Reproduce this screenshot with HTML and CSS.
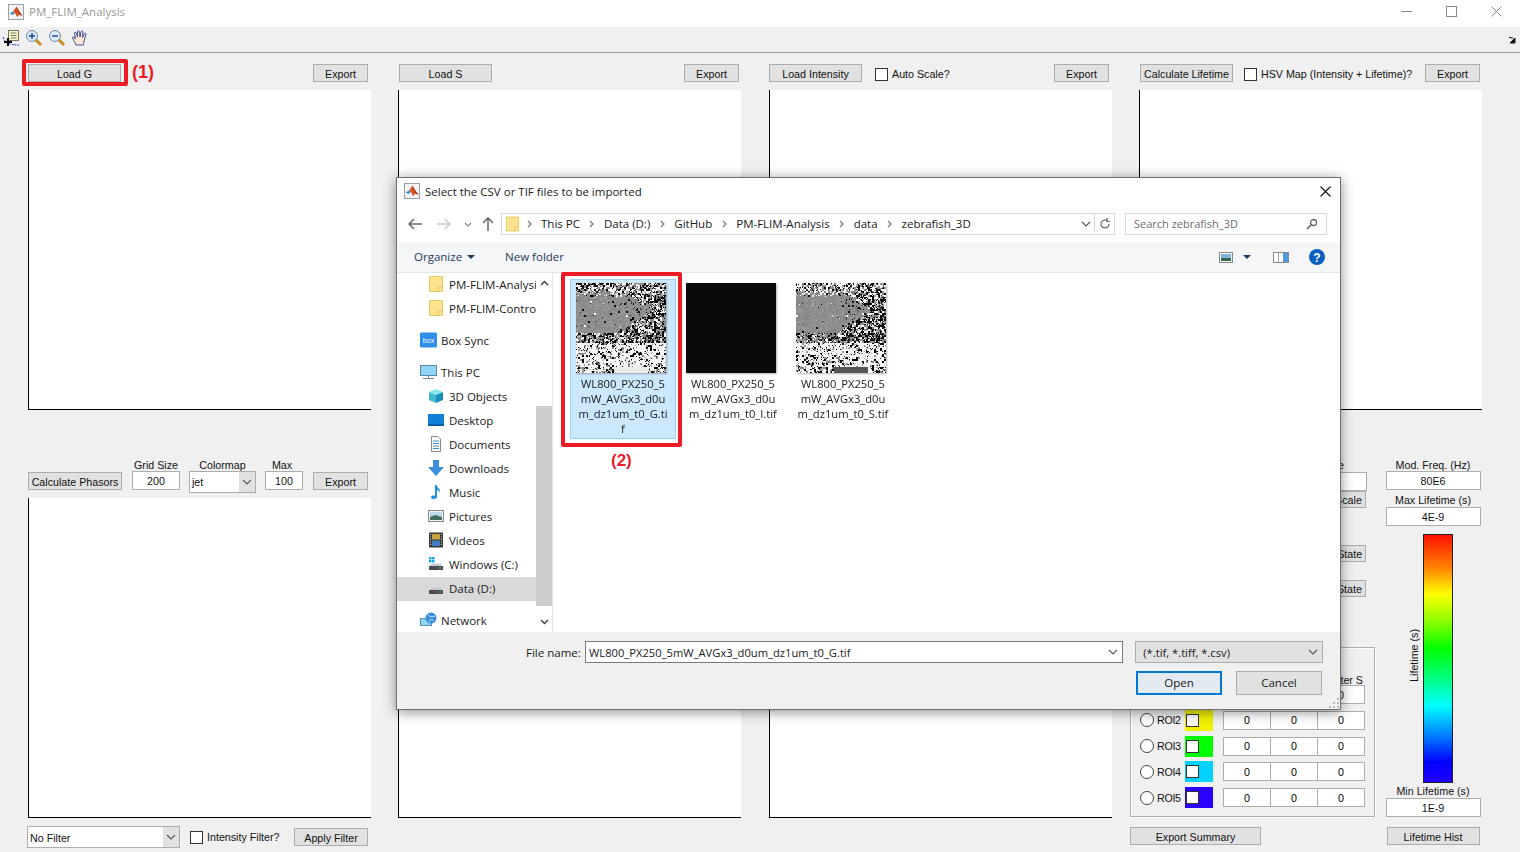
FILE: index.html
```html
<!DOCTYPE html>
<html lang="en">
<head>
    <meta charset="UTF-8">
    <title>PM_FLIM_Analysis</title>
    <link rel="stylesheet" href="styles.css">
</head>
<body>
    <svg class="defs" width="0" height="0">
        <symbol id="matlab" viewBox="0 0 16 16">
            <rect x="0.5" y="0.5" width="15" height="15" fill="#f4f4f6" stroke="#9aa0aa"/>
            <path d="M1.5 9.5 5 7.5 7 9 4.5 11z" fill="#3f8fd0"/>
            <path d="M5 7.5 8.5 2.5 11 7 14.5 12 11.5 10.5 9 13 7 9z" fill="#d9541e"/>
            <path d="M8.5 2.5 11 7 14.5 12 11.5 10.5 9.5 6z" fill="#a8321a"/>
        </symbol>
        <symbol id="folder" viewBox="0 0 14 16">
            <path d="M0.5 0.5H13.5V15.5H0.5z" fill="#fde38f" stroke="#e8c766"/>
            <path d="M9.5 15V11H13" fill="none" stroke="#e8c766"/>
        </symbol>
        <symbol id="drive" viewBox="0 0 16 16">
            <path d="M2 10 3.5 7.5H12.5L14 10z" fill="#c4c7cb"/>
            <rect x="1" y="10" width="14" height="4" fill="#4a4f55"/>
            <rect x="11" y="11.5" width="2" height="1" fill="#4fd36a"/>
        </symbol>
        <symbol id="chev" viewBox="0 0 10 6">
            <path d="M1 1 5 5 9 1" fill="none" stroke="#555" stroke-width="1.1"/>
        </symbol>
        <symbol id="crumb" viewBox="0 0 5 8">
            <path d="M1 1 4 4 1 7" fill="none" stroke="#777" stroke-width="1.2"/>
        </symbol>
    </svg>

    <div class="titlebar">
        <svg class="app-icon"><use href="#matlab"/></svg>
        <span class="app-title">PM_FLIM_Analysis</span>
        <div class="win-btns">
            <svg width="11" height="11" viewBox="0 0 11 11"><path d="M0 5.5H11" stroke="#8a8a8a"/></svg>
            <svg width="11" height="11" viewBox="0 0 11 11"><rect x="0.5" y="0.5" width="10" height="10" fill="none" stroke="#8a8a8a"/></svg>
            <svg width="11" height="11" viewBox="0 0 11 11"><path d="M0.5 0.5 10.5 10.5M10.5 0.5 0.5 10.5" stroke="#8a8a8a"/></svg>
        </div>
    </div>

    <div class="toolbar">
        <svg width="18" height="18" viewBox="0 0 18 18">
            <path d="M1 8C3 13 6 16 17 16" fill="none" stroke="#2230d0" stroke-dasharray="2 1"/>
            <rect x="6.5" y="1.5" width="10" height="10" fill="#fbf6c8" stroke="#77775a"/>
            <path d="M8.5 4H14.500M8.500 6.500H14.500M8.500 9H14.500" stroke="#777"/>
            <path d="M6 9V17M2 13H10" stroke="#000" stroke-width="2"/>
        </svg>
        <svg width="18" height="18" viewBox="0 0 18 18">
            <path d="M10.500 10.500 16 16" stroke="#c98a1e" stroke-width="3"/>
            <circle cx="7" cy="7" r="5.500" fill="#d8ecfb" stroke="#7b8a99"/>
            <path d="M4 7H10M7 4V10" stroke="#1d3f8f" stroke-width="1.400"/>
        </svg>
        <svg width="18" height="18" viewBox="0 0 18 18">
            <path d="M10.500 10.500 16 16" stroke="#c98a1e" stroke-width="3"/>
            <circle cx="7" cy="7" r="5.500" fill="#d8ecfb" stroke="#7b8a99"/>
            <path d="M4 7H10" stroke="#1d3f8f" stroke-width="1.400"/>
        </svg>
        <svg width="18" height="18" viewBox="0 0 18 18">
            <path d="M5 16C4 13 1.500 10 1.500 8.500 2.500 7.500 4 9 4.500 10L3.500 4C3.500 3 5 3 5.500 4L6.500 8 6.500 2.500C6.500 1.500 8 1.500 8.500 2.500L9 8 10 2.500C10.500 1.500 12 2 12 3L11.500 8.500 13.500 4.500C14.500 4 15.500 4.500 15 5.500L13 12C13 14 12.500 15 12.500 16z" fill="#fde9d2" stroke="#2a3d8f" stroke-width="0.900"/>
        </svg>
        <svg class="tb-arrow" width="8" height="8" viewBox="0 0 8 8"><path d="M1 1.500H3M7 2V7H2zM5 2 3 2" fill="#111" stroke="#111"/></svg>
    </div>

    <main class="workspace">
        <section class="col">
            <div class="ctl-row top-row">
                <button class="btn wide">Load G</button>
                <button class="btn export">Export</button>
            </div>
            <div class="axes"></div>
            <div class="head-row">
                <button class="btn calc">Calculate Phasors</button>
                <label class="field grid-size">Grid Size<input class="box" value="200"></label>
                <div class="field colormap">Colormap
                    <div class="combo tall"><span>jet</span><i><svg width="10" height="6"><use href="#chev"/></svg></i></div>
                </div>
                <label class="field max"><span class="max-label">Max</span><input class="box" value="100"></label>
                <button class="btn export">Export</button>
            </div>
            <div class="axes"></div>
            <div class="ctl-row foot-row">
                <div class="combo filter"><span>No Filter</span><i><svg width="10" height="6"><use href="#chev"/></svg></i></div>
                <label class="check-label"><input type="checkbox">Intensity Filter?</label>
                <button class="btn apply">Apply Filter</button>
            </div>
        </section>

        <section class="col">
            <div class="ctl-row top-row">
                <button class="btn wide shift">Load S</button>
                <button class="btn export">Export</button>
            </div>
            <div class="axes"></div>
            <div class="head-row"></div>
            <div class="axes"></div>
        </section>

        <section class="col">
            <div class="ctl-row top-row">
                <button class="btn wide">Load Intensity</button>
                <label class="check-label auto"><input type="checkbox">Auto Scale?</label>
                <button class="btn export">Export</button>
            </div>
            <div class="axes"></div>
            <div class="head-row"></div>
            <div class="axes"></div>
        </section>

        <section class="col">
            <div class="ctl-row top-row">
                <button class="btn wide shift">Calculate Lifetime</button>
                <label class="check-label hsv"><input type="checkbox">HSV Map (Intensity + Lifetime)?</label>
                <button class="btn export last">Export</button>
            </div>
            <div class="axes"></div>
            <div class="side">
                <div class="side-left">
                    <div class="phase-label">Phase</div>
                    <input class="box phase-box" value="">
                    <button class="btn side-btn scale">Auto Scale</button>
                    <button class="btn side-btn save">Save State</button>
                    <button class="btn side-btn load">Load State</button>
                    <div class="roi-panel">
                        <div class="roi-head">Center S</div>
                        <div class="roi-row"><i class="radio"></i><span>ROI1</span><b class="swatch red"><input type="checkbox"></b><div class="triple"><input value="0"><input value="0"><input value="0"></div></div>
                        <div class="roi-row"><i class="radio"></i><span>ROI2</span><b class="swatch yellow"><input type="checkbox"></b><div class="triple"><input value="0"><input value="0"><input value="0"></div></div>
                        <div class="roi-row"><i class="radio"></i><span>ROI3</span><b class="swatch green"><input type="checkbox"></b><div class="triple"><input value="0"><input value="0"><input value="0"></div></div>
                        <div class="roi-row"><i class="radio"></i><span>ROI4</span><b class="swatch cyan"><input type="checkbox"></b><div class="triple"><input value="0"><input value="0"><input value="0"></div></div>
                        <div class="roi-row"><i class="radio"></i><span>ROI5</span><b class="swatch blue"><input type="checkbox"></b><div class="triple"><input value="0"><input value="0"><input value="0"></div></div>
                    </div>
                    <button class="btn summary">Export Summary</button>
                </div>
                <div class="side-right">
                    <div class="side-label first-label">Mod. Freq. (Hz)</div>
                    <input class="box side-box" value="80E6">
                    <div class="side-label second">Max Lifetime (s)</div>
                    <input class="box side-box" value="4E-9">
                    <div class="bar-row">
                        <span class="bar-label">Lifetime (s)</span>
                        <div class="jet"></div>
                    </div>
                    <div class="side-label third">Min Lifetime (s)</div>
                    <input class="box side-box" value="1E-9">
                    <button class="btn hist">Lifetime Hist</button>
                </div>
            </div>
        </section>
    </main>

    <div class="dialog">
        <div class="dlg-title">
            <svg class="app-icon"><use href="#matlab"/></svg>
            <span>Select the CSV or TIF files to be imported</span>
            <svg class="dlg-close" width="11" height="11" viewBox="0 0 11 11"><path d="M0.500 0.500 10.500 10.500M10.500 0.500 0.500 10.500" stroke="#111" stroke-width="1.100"/></svg>
        </div>

        <div class="dlg-nav">
            <svg width="14" height="12" viewBox="0 0 14 12"><path d="M6 1 1 6 6 11M1 6H14" fill="none" stroke="#666" stroke-width="1.500"/></svg>
            <svg class="nav-fwd" width="14" height="12" viewBox="0 0 14 12"><path d="M8 1 13 6 8 11M13 6H0" fill="none" stroke="#ccc" stroke-width="1.500"/></svg>
            <svg class="nav-drop" width="8" height="5" viewBox="0 0 8 5"><path d="M1 1 4 4 7 1" fill="none" stroke="#888" stroke-width="1.200"/></svg>
            <svg class="nav-up" width="12" height="14" viewBox="0 0 12 14"><path d="M1 6 6 1 11 6M6 1V14" fill="none" stroke="#666" stroke-width="1.500"/></svg>
            <div class="address">
                <svg class="addr-folder" width="13" height="16"><use href="#folder"/></svg>
                <svg class="crumb" width="5" height="8"><use href="#crumb"/></svg><span>This PC</span>
                <svg class="crumb" width="5" height="8"><use href="#crumb"/></svg><span>Data (D:)</span>
                <svg class="crumb" width="5" height="8"><use href="#crumb"/></svg><span>GitHub</span>
                <svg class="crumb" width="5" height="8"><use href="#crumb"/></svg><span>PM-FLIM-Analysis</span>
                <svg class="crumb" width="5" height="8"><use href="#crumb"/></svg><span>data</span>
                <svg class="crumb" width="5" height="8"><use href="#crumb"/></svg><span>zebrafish_3D</span>
                <svg class="addr-chev" width="10" height="6"><use href="#chev"/></svg>
                <div class="addr-refresh">
                    <svg width="12" height="12" viewBox="0 0 12 12"><path d="M10 6A4 4 0 1 1 8 2.500M8 0V3.500H11" fill="none" stroke="#666" stroke-width="1.200"/></svg>
                </div>
            </div>
            <div class="search">
                <span>Search zebrafish_3D</span>
                <svg width="12" height="12" viewBox="0 0 12 12"><circle cx="7.500" cy="4.500" r="3" fill="none" stroke="#666" stroke-width="1.300"/><path d="M5.500 6.500 1 11" stroke="#666" stroke-width="1.600"/></svg>
            </div>
        </div>

        <div class="dlg-tools">
            <span class="organize">Organize</span>
            <svg class="tri" width="8" height="4" viewBox="0 0 8 4"><path d="M0 0H8L4 4z" fill="#1e395b"/></svg>
            <span class="new-folder">New folder</span>
            <svg class="view-ico" width="14" height="11" viewBox="0 0 14 11"><rect x="0.500" y="0.500" width="13" height="10" fill="#fff" stroke="#888"/><rect x="2" y="2" width="10" height="4" fill="#7fb3dc"/><rect x="2" y="6" width="10" height="3" fill="#2e6b4f"/></svg>
            <svg class="tri view-tri" width="8" height="4" viewBox="0 0 8 4"><path d="M0 0H8L4 4z" fill="#1e395b"/></svg>
            <svg class="pane-ico" width="16" height="11" viewBox="0 0 16 11"><rect x="0.500" y="0.500" width="15" height="10" fill="#fff" stroke="#888"/><rect x="10" y="1" width="5" height="9" fill="#4a9be0"/><path d="M5.500 1V10" stroke="#aaa"/></svg>
            <svg class="help-ico" width="16" height="16" viewBox="0 0 16 16"><circle cx="8" cy="8" r="8" fill="#0a5fc0"/><text x="8" y="12.500" text-anchor="middle" class="help-q">?</text></svg>
        </div>

        <div class="dlg-body">
            <nav class="tree">
                <div class="tree-list">
                    <div class="item sub first"><svg width="16" height="16"><use href="#folder"/></svg><span>PM-FLIM-Analysis</span></div>
                    <div class="item sub"><svg width="16" height="16"><use href="#folder"/></svg><span>PM-FLIM-Control</span></div>
                    <div class="item top gap">
                        <svg width="17" height="16" viewBox="0 0 17 16"><rect y="0.500" width="17" height="15" rx="1" fill="#2f8fe8"/><text x="8.500" y="10.500" text-anchor="middle" class="box-word">box</text></svg>
                        <span>Box Sync</span>
                    </div>
                    <div class="item top gap">
                        <svg width="17" height="16" viewBox="0 0 17 16"><rect x="0.500" y="1.500" width="16" height="10" fill="#8fd4f5" stroke="#5a8aa8"/><path d="M8.500 12V14M3 14.500H14" stroke="#7b8a99"/></svg>
                        <span>This PC</span>
                    </div>
                    <div class="item sub">
                        <svg width="16" height="16" viewBox="0 0 16 16"><path d="M8 1 15 4 8 7 1 4z" fill="#8de4f0"/><path d="M1 4 8 7V15L1 12z" fill="#41b8d6"/><path d="M15 4 8 7V15L15 12z" fill="#1a8eb8"/></svg>
                        <span>3D Objects</span>
                    </div>
                    <div class="item sub">
                        <svg width="16" height="16" viewBox="0 0 16 16"><rect y="2" width="16" height="12" fill="#0f7fd8"/><rect y="12.500" width="16" height="1.500" fill="#0a4f90"/></svg>
                        <span>Desktop</span>
                    </div>
                    <div class="item sub">
                        <svg width="16" height="16" viewBox="0 0 16 16"><path d="M3.500 0.500H10L12.500 3V15.500H3.500z" fill="#fff" stroke="#8a8a8a"/><path d="M5 5H11M5 7.500H11M5 10H11M5 12.500H11" stroke="#3f8fd0"/></svg>
                        <span>Documents</span>
                    </div>
                    <div class="item sub">
                        <svg width="16" height="16" viewBox="0 0 16 16"><path d="M5 0H11V7H16L8 16 0 7H5z" fill="#3a8edb"/></svg>
                        <span>Downloads</span>
                    </div>
                    <div class="item sub">
                        <svg width="16" height="16" viewBox="0 0 16 16"><path d="M7 1H8.500C9 4 13 5 12 9 11.500 6.500 10 6.500 9 6V13C9 15 3.500 16 3 13.500 3 11.500 6 11 7 12z" fill="#1e90e6"/></svg>
                        <span>Music</span>
                    </div>
                    <div class="item sub">
                        <svg width="16" height="16" viewBox="0 0 16 16"><rect x="0.500" y="2.500" width="15" height="11" fill="#f4f4f4" stroke="#888"/><rect x="2" y="4" width="12" height="5" fill="#bcd9ea"/><path d="M2 9 7 7 14 9V12H2z" fill="#3d7060"/></svg>
                        <span>Pictures</span>
                    </div>
                    <div class="item sub">
                        <svg width="16" height="16" viewBox="0 0 16 16"><rect x="1" y="0.500" width="14" height="15" fill="#3a3a3a"/><rect x="4" y="2" width="8" height="5.500" fill="#c8a03c"/><rect x="4" y="8.500" width="8" height="5.500" fill="#3f7fc0"/><path d="M2.500 2V14M13.500 2V14" stroke="#ccc" stroke-dasharray="1 1.500"/></svg>
                        <span>Videos</span>
                    </div>
                    <div class="item sub">
                        <svg width="16" height="16"><use href="#drive"/><rect x="1" y="1" width="2.500" height="2.500" fill="#12a5e8"/><rect x="4" y="1" width="2.500" height="2.500" fill="#12a5e8"/><rect x="1" y="4" width="2.500" height="2.500" fill="#12a5e8"/><rect x="4" y="4" width="2.500" height="2.500" fill="#12a5e8"/></svg>
                        <span>Windows (C:)</span>
                    </div>
                    <div class="item sub selected"><svg width="16" height="16"><use href="#drive"/></svg><span>Data (D:)</span></div>
                    <div class="item top gap">
                        <svg width="17" height="16" viewBox="0 0 17 16"><rect x="0.500" y="6.500" width="11" height="7" fill="#8fd4f5" stroke="#5a8aa8"/><circle cx="11" cy="6" r="5.500" fill="#3a8edb"/><path d="M8 3C10 5 12 5 15 4M9 10C10 7 12 7 14 9" stroke="#bfe3f8" fill="none"/></svg>
                        <span>Network</span>
                    </div>
                </div>
                <div class="tree-scroll">
                    <svg width="9" height="6" viewBox="0 0 9 6"><path d="M1 5 4.500 1.500 8 5" fill="none" stroke="#444" stroke-width="1.500"/></svg>
                    <div class="thumb-bar"></div>
                    <svg width="9" height="6" viewBox="0 0 9 6"><path d="M1 1 4.500 4.500 8 1" fill="none" stroke="#444" stroke-width="1.500"/></svg>
                </div>
            </nav>
            <div class="files">
                <figure class="tile selected">
                    <canvas class="shot" width="90" height="90" data-seed="17" data-kind="g"></canvas>
                    <figcaption>WL800_PX250_5<br>mW_AVGx3_d0u<br>m_dz1um_t0_G.ti<br>f</figcaption>
                </figure>
                <figure class="tile">
                    <div class="shot black"></div>
                    <figcaption>WL800_PX250_5<br>mW_AVGx3_d0u<br>m_dz1um_t0_I.tif</figcaption>
                </figure>
                <figure class="tile">
                    <canvas class="shot" width="90" height="90" data-seed="91" data-kind="s"></canvas>
                    <figcaption>WL800_PX250_5<br>mW_AVGx3_d0u<br>m_dz1um_t0_S.tif</figcaption>
                </figure>
            </div>
        </div>

        <div class="dlg-foot">
            <div class="foot-line">
                <span class="fname-label">File name:</span>
                <div class="fname"><span>WL800_PX250_5mW_AVGx3_d0um_dz1um_t0_G.tif</span><svg width="10" height="6"><use href="#chev"/></svg></div>
                <div class="ftype"><span>(*.tif, *.tiff, *.csv)</span><svg width="10" height="6"><use href="#chev"/></svg></div>
            </div>
            <div class="foot-actions">
                <button class="dlg-btn primary">Open</button>
                <button class="dlg-btn">Cancel</button>
            </div>
            <svg class="grip" width="10" height="10" viewBox="0 0 10 10"><path d="M8 0h2v2H8zM4 4h2v2H4zM8 4h2v2H8zM0 8h2v2H0zM4 8h2v2H4zM8 8h2v2H8z" fill="#bbb"/></svg>
        </div>
    </div>

    <div class="mark mark-one"></div>
    <div class="mark-text text-one">(1)</div>
    <div class="mark mark-two"></div>
    <div class="mark-text text-two">(2)</div>

    <script src="script.js"></script>
</body>
</html>
```

FILE: styles.css
```css
* {
    box-sizing: border-box;
}

html, body {
    margin: 0;
    height: 852px;
    overflow: hidden;
}

body {
    position: relative;
    background-color: #f0f0f0;
    font-family: "Liberation Sans", Arial, sans-serif;
    font-size: 10.7px;
    color: #111;
}

.defs {
    position: absolute;
}

button {
    font: inherit;
    color: inherit;
    padding: 0;
}

/* window chrome */
.titlebar {
    display: flex;
    align-items: center;
    height: 27px;
    padding-left: 8px;
    padding-bottom: 4px;
    background: #fff;
}

.app-icon {
    width: 16px;
    height: 16px;
}

.app-title {
    margin-left: 5px;
    font-family: "Open Sans", sans-serif;
    font-size: 11.5px;
    color: #9a9a9a;
}

.win-btns {
    display: flex;
    gap: 34px;
    margin-left: auto;
    padding-right: 18px;
}

.toolbar {
    display: flex;
    align-items: center;
    gap: 5px;
    height: 26px;
    padding-left: 2px;
    padding-bottom: 3px;
    border-bottom: 1px solid #a0a0a0;
}

.tb-arrow {
    margin-left: auto;
    margin-right: 4px;
    margin-top: 3px;
}

/* matlab figure */
.workspace {
    display: grid;
    grid-template-columns: 343px 344px 343px 343px;
    column-gap: 27px;
    padding-left: 28px;
}

.col {
    display: flex;
    flex-direction: column;
}

.ctl-row {
    display: flex;
    align-items: center;
}

.top-row {
    height: 18px;
    margin-top: 11px;
    margin-bottom: 8px;
}

.foot-row {
    height: 22px;
    margin-top: 8px;
    margin-left: -1px;
}

.axes {
    width: 343px;
    height: 320px;
    background: #fff;
    border-left: 1px solid #000;
    border-bottom: 1px solid #000;
    flex: none;
}

.btn {
    height: 18px;
    padding-top: 1px;
    background: #e1e1e1;
    border: 1px solid #adadad;
    text-align: center;
    white-space: nowrap;
}

.wide {
    width: 93px;
}

.shift {
    margin-left: 1px;
}

.export {
    width: 55px;
    margin-left: auto;
    margin-right: 3px;
}

.last {
    margin-right: 2px;
}

.box {
    display: block;
    height: 19px;
    padding: 0;
    border: 1px solid #adadad;
    background: #fff;
    font: inherit;
    color: inherit;
    text-align: center;
}

.head-row {
    display: flex;
    align-items: flex-start;
    height: 88px;
    padding-top: 48px;
    flex: none;
}

.head-row .btn {
    margin-top: 14px;
}

.calc {
    width: 94px;
}

.field {
    display: flex;
    flex-direction: column;
    align-items: center;
    line-height: 15px;
}

.field .box, .field .combo {
    margin-top: -2px;
}

.grid-size {
    margin-left: 10px;
}

.grid-size .box {
    width: 48px;
}

.colormap {
    margin-left: 9px;
}

.max {
    margin-left: 9px;
}

.max-label {
    margin-right: 4px;
}

.max .box {
    width: 38px;
}

.combo {
    display: flex;
    align-items: center;
    height: 22px;
    background: #fff;
    border: 1px solid #adadad;
    padding-left: 2px;
}

.combo span {
    flex: 1;
    padding-top: 1px;
}

.combo i {
    display: flex;
    align-items: center;
    justify-content: center;
    width: 16px;
    height: 100%;
    background: #e1e1e1;
}

.tall {
    width: 67px;
}

.filter {
    width: 153px;
}

.check-label {
    display: flex;
    align-items: center;
    gap: 4px;
    white-space: nowrap;
}

.check-label input, .swatch input {
    appearance: none;
    flex: none;
    width: 13px;
    height: 13px;
    margin: 0;
    background: #fff;
    border: 1px solid #333;
}

.top-row .check-label {
    margin-top: 2px;
}

.foot-row .check-label {
    margin-left: 10px;
}

.apply {
    width: 74px;
    margin-left: auto;
    margin-right: 3px;
}

.auto {
    margin-left: 13px;
}

.hsv {
    margin-left: 11px;
}

/* lower right controls */
.side {
    display: flex;
    gap: 11px;
    width: 352px;
    margin-left: -9px;
    margin-top: 48px;
}

.side-left {
    display: flex;
    flex-direction: column;
    align-items: flex-end;
    width: 245px;
}

.phase-label {
    margin-top: 1px;
    margin-right: 31px;
    line-height: 13px;
}

.phase-box {
    width: 50px;
    margin-right: 8px;
}

.side-btn {
    width: 60px;
    height: 17px;
    padding-top: 0;
    margin-right: 9px;
}

.scale {
    margin-top: 0;
}

.save {
    margin-top: 37px;
}

.load {
    margin-top: 18px;
}

.roi-panel {
    width: 245px;
    height: 170px;
    margin-top: 50px;
    padding: 26px 9px 0 9px;
    border: 1px solid #adadad;
    box-shadow: inset 1px 1px 0 #fff, 1px 1px 0 #fff;
}

.roi-head {
    height: 12px;
    margin-bottom: -2px;
    line-height: 12px;
    padding-right: 2px;
    text-align: right;
}

.roi-row {
    display: flex;
    align-items: center;
    height: 21px;
    margin-bottom: 4.8px;
    letter-spacing: -0.3px;
}

.radio {
    flex: none;
    width: 14px;
    height: 14px;
    background: #fff;
    border: 1px solid #444;
    border-radius: 50%;
}

.roi-row span {
    width: 34px;
    padding-left: 3px;
}

.swatch {
    display: flex;
    align-items: center;
    flex: none;
    width: 28px;
    height: 21px;
    padding-left: 1px;
}

.red { background: #ff0000; }
.yellow { background: #f0f000; }
.green { background: #00ff00; }
.cyan { background: #00d2ff; }
.blue { background: #2a00ff; }

.triple {
    display: grid;
    grid-template-columns: repeat(3, 47px);
    margin-left: 11px;
    height: 19px;
}

.triple input {
    min-width: 0;
    margin-left: -1px;
    padding: 0;
    border: 1px solid #adadad;
    background: #fff;
    font: inherit;
    letter-spacing: 0;
    text-align: center;
}

.summary {
    align-self: flex-start;
    width: 131px;
    margin-top: 10px;
}

.side-right {
    display: flex;
    flex-direction: column;
    align-items: center;
    width: 96px;
    margin-left: -1px;
}

.side-label {
    height: 13px;
    line-height: 13px;
    white-space: nowrap;
}

.first-label {
    line-height: 15px;
}

.second {
    margin-top: 4px;
}

.third {
    margin-top: 2px;
}

.side-box {
    width: 95px;
}

.bar-row {
    position: relative;
    display: flex;
    justify-content: center;
    width: 100%;
    margin-top: 8px;
}

.bar-label {
    position: absolute;
    left: 23px;
    top: 95px;
    writing-mode: vertical-rl;
    transform: rotate(180deg);
    white-space: nowrap;
}

.jet {
    width: 30px;
    height: 249px;
    margin-left: 9px;
    border: 1px solid #222;
    background: linear-gradient(to bottom,
        #ff1000 0%, #ff8000 13%, #ffff00 24%, #80ff00 36%, #00ff00 46%,
        #00ff80 58%, #00ffff 69%, #0080ff 81%, #0000ff 92%, #2000ff 100%);
}

.hist {
    width: 93px;
    margin-top: 10px;
}

/* file dialog */
.dialog {
    position: absolute;
    left: 396px;
    top: 177px;
    width: 945px;
    height: 533px;
    display: flex;
    flex-direction: column;
    background: #fff;
    border: 1px solid #6f6f6f;
    box-shadow: 0 2px 12px rgba(0, 0, 0, 0.45);
    font-family: "Open Sans", "Noto Sans", sans-serif;
    font-size: 11.5px;
    color: #1a1a1a;
}

.dlg-title {
    display: flex;
    align-items: center;
    gap: 5px;
    height: 28px;
    padding-left: 7px;
    padding-right: 9px;
    padding-bottom: 2px;
    flex: none;
}

.dlg-close {
    margin-left: auto;
}

.dlg-nav {
    display: flex;
    align-items: center;
    height: 36px;
    padding-left: 11px;
    flex: none;
}

.nav-fwd {
    margin-left: 15px;
}

.nav-drop {
    margin-left: 13px;
}

.nav-up {
    margin-left: 10px;
}

.address {
    display: flex;
    align-items: center;
    gap: 9.5px;
    width: 614px;
    height: 22px;
    margin-left: 7px;
    padding-left: 4px;
    padding-bottom: 1px;
    border: 1px solid #d9d9d9;
}

.addr-folder {
    flex: none;
    margin-right: -2px;
}

.addr-chev {
    margin-left: auto;
    margin-right: -1px;
}

.addr-refresh {
    display: flex;
    align-items: center;
    justify-content: center;
    width: 20px;
    height: 100%;
    border-left: 1px solid #d9d9d9;
    margin-left: -5px;
}

.search {
    display: flex;
    align-items: center;
    justify-content: space-between;
    width: 202px;
    height: 22px;
    margin-left: 10px;
    padding: 0 8px 1px 8px;
    border: 1px solid #d9d9d9;
    font-size: 11px;
    color: #6d6d6d;
}

.dlg-tools {
    display: flex;
    align-items: center;
    height: 31px;
    padding-left: 17px;
    background: #f5f6f7;
    border-bottom: 1px solid #e5e5e5;
    flex: none;
    color: #1e395b;
}

.organize, .new-folder {
    margin-top: -2px;
}

.tri {
    margin-left: 5px;
}

.new-folder {
    margin-left: 30px;
}

.view-ico {
    margin-left: auto;
}

.view-tri {
    margin-left: 10px;
}

.pane-ico {
    margin-left: 22px;
}

.help-ico {
    margin-left: 20px;
    margin-right: 15px;
}

.help-q {
    font-family: "Liberation Sans", sans-serif;
    font-size: 12px;
    font-weight: bold;
    fill: #fff;
}

.dlg-body {
    display: flex;
    height: 359px;
    flex: none;
}

.tree {
    display: flex;
    width: 156px;
    border-right: 1px solid #e5e5e5;
    flex: none;
}

.tree-list {
    width: 139px;
    overflow: hidden;
    flex: none;
}

.item {
    display: flex;
    align-items: center;
    height: 24px;
    padding-bottom: 2px;
    white-space: nowrap;
    overflow: hidden;
}

.item svg {
    flex: none;
}

.gap {
    margin-top: 8px;
}

.sub {
    padding-left: 31px;
}

.sub span {
    margin-left: 5px;
}

.top {
    padding-left: 23px;
}

.top span {
    margin-left: 4px;
}

.item.selected {
    background: #d9d9d9;
}

.box-word {
    font-family: "Liberation Sans", sans-serif;
    font-size: 7px;
    fill: #fff;
}

.tree-scroll {
    display: flex;
    flex-direction: column;
    align-items: center;
    justify-content: space-between;
    width: 16px;
    padding: 7px 0;
    position: relative;
}

.thumb-bar {
    position: absolute;
    left: 0;
    top: 133px;
    width: 16px;
    height: 200px;
    background: #cdcdcd;
}

.files {
    display: flex;
    gap: 4px;
    align-items: flex-start;
    padding: 6px 0 0 17px;
}

.tile {
    width: 106px;
    height: 160px;
    margin: 0;
    padding-top: 3px;
    border: 1px solid transparent;
    text-align: center;
}

.tile.selected {
    background: #cce8ff;
    border-color: #99d1ff;
}

.shot {
    display: block;
    width: 90px;
    height: 90px;
    margin-left: 5px;
    box-shadow: 1px 1px 2px rgba(0, 0, 0, 0.3);
}

.black {
    background: #0a0a0a;
}

figcaption {
    margin-top: 3px;
    margin-left: -3px;
    margin-right: -3px;
    font-size: 11.2px;
    line-height: 15px;
    white-space: nowrap;
}

.dlg-foot {
    position: relative;
    flex: 1;
    padding: 9px 17px 0 130px;
    background: #f0f0f0;
}

.foot-line {
    display: flex;
    align-items: center;
}

.fname-label {
    flex: none;
    width: 54px;
    margin-left: -1px;
    white-space: nowrap;
}

.fname {
    display: flex;
    align-items: center;
    justify-content: space-between;
    width: 539px;
    height: 22px;
    margin-left: 5px;
    padding: 0 4px 0 3px;
    background: #fff;
    border: 1px solid #7a7a7a;
    font-size: 11.2px;
}

.ftype {
    display: flex;
    align-items: center;
    justify-content: space-between;
    width: 188px;
    height: 22px;
    margin-left: 12px;
    padding: 0 4px 0 7px;
    background: #e1e1e1;
    border: 1px solid #adadad;
    font-size: 11.2px;
}

.foot-actions {
    display: flex;
    justify-content: flex-end;
    gap: 14px;
    margin-top: 8px;
    padding-right: 1px;
}

.dlg-btn {
    width: 86px;
    height: 24px;
    padding-bottom: 2px;
    background: #e1e1e1;
    border: 1px solid #adadad;
    font: inherit;
}

.primary {
    background: #e3e9f1;
    border: 2px solid #0078d7;
}

.grip {
    position: absolute;
    right: 1px;
    bottom: 1px;
}

/* red annotations drawn on the screenshot */
.mark {
    position: absolute;
    border: 4px solid #ed1c24;
    border-radius: 2px;
}

.mark-one {
    left: 22px;
    top: 59px;
    width: 106px;
    height: 27px;
}

.mark-two {
    left: 561px;
    top: 272px;
    width: 121px;
    height: 175px;
}

.mark-text {
    position: absolute;
    font-family: "Liberation Sans", sans-serif;
    font-size: 17px;
    font-weight: bold;
    color: #ed1c24;
    line-height: 18px;
}

.text-one {
    left: 132px;
    top: 63px;
    font-size: 18px;
}

.text-two {
    left: 611px;
    top: 452px;
}
```

FILE: script.js
```js
// the tif previews are just noise shaped like the fish slice
function makeRandom(seed) {
    let s = seed;
    return function () {
        s = (s * 16807) % 2147483647;
        return s / 2147483647;
    };
}

function pick(r, white, black) {
    const v = r();
    if (v < black) return 12;
    if (v < black + white) return 245;
    return 130 + r() * 24;
}

function pixel(x, y, r, kind) {
    const u = x / 90;
    const v = y / 90;
    if (v < 0.09) return pick(r, 0.4, 0.3);
    if (v < 0.55) {
        // grey band narrows towards the right
        const edge = 0.85 - Math.abs(v - 0.3) * 1.6;
        const top = v < 0.14 ? 0.25 : 0;
        if (u < edge) return pick(r, 0.01 + top, 0.015 + top * u + (u > 0.55 ? 0.1 : 0));
        return pick(r, 0.3, 0.4);
    }
    if (v < 0.66) return pick(r, 0.2, 0.45 - (u < 0.5 ? 0.15 : 0));
    if (v > 0.93) {
        if (u > 0.4 && u < 0.8) return kind === 's' ? 85 : 235;
        return pick(r, 0.5, 0.3);
    }
    return pick(r, 0.72, 0.13);
}

document.querySelectorAll('canvas.shot').forEach(function (canvas) {
    const ctx = canvas.getContext('2d');
    const r = makeRandom(parseInt(canvas.dataset.seed) * 1000 + 7);
    // base layer, one pixel per cell
    for (let y = 0; y < 90; y++) {
        for (let x = 0; x < 90; x++) {
            const g = Math.round(pixel(x, y, r, canvas.dataset.kind));
            ctx.fillStyle = `rgb(${g},${g},${g})`;
            ctx.fillRect(x, y, 1, 1);
        }
    }
    // bigger specks on top so it does not read as fine static
    for (let y = 0; y < 90; y += 2) {
        for (let x = 0; x < 90; x += 2) {
            if (r() < 0.55) {
                const g = Math.round(pixel(x, y, r, canvas.dataset.kind));
                ctx.fillStyle = `rgb(${g},${g},${g})`;
                ctx.fillRect(x, y, 2, 2);
            }
        }
    }
});
```
